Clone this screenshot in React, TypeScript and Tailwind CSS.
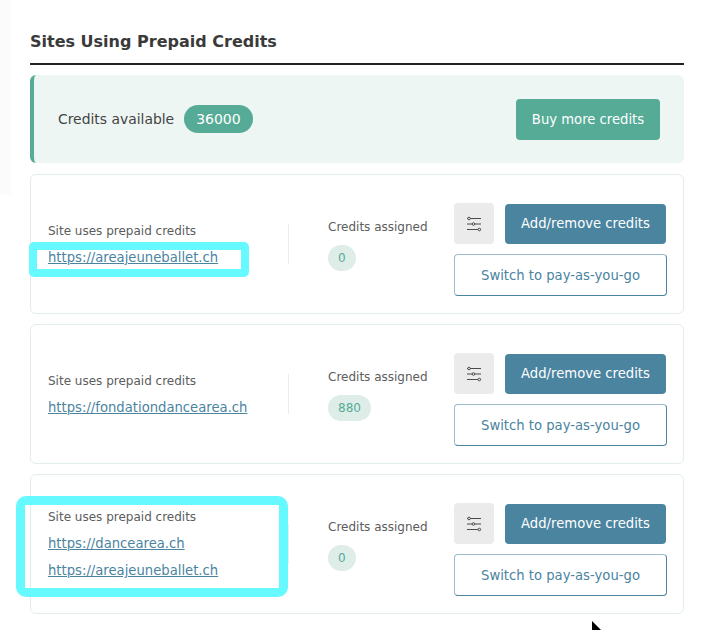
import React from 'react';

interface SiteCard {
  links: string[];
  credits: number;
}

const sites: SiteCard[] = [
  { links: ['https://areajeuneballet.ch'], credits: 0 },
  { links: ['https://fondationdancearea.ch'], credits: 880 },
  { links: ['https://dancearea.ch', 'https://areajeuneballet.ch'], credits: 0 },
];

const SlidersIcon = () => (
  <svg className="w-[16px] h-[16px]" viewBox="0 0 16 16" fill="none" stroke="#4a4a4a" strokeWidth="1">
    <path d="M4 2.5H15M1 2.5H2" />
    <circle cx="3" cy="2.5" r="1.3" />
    <path d="M1 8H6M9 8H15" />
    <circle cx="7.5" cy="8" r="1.3" />
    <path d="M1 13.5H12M14.6 13.5H15" />
    <circle cx="13.3" cy="13.5" r="1.3" />
  </svg>
);

const Card: React.FC<{ site: SiteCard }> = ({ site }) => (
  <div className="h-[140px] flex items-center pl-[17px] bg-white border border-[#e3ecef] rounded-md">
    <div className="w-[241px] h-[40px] flex items-center border-r border-[#e8eef0]">
      <div className="flex flex-col shrink-0 gap-[11px]">
        <span className="text-[12px] leading-[16px] text-[#5c5c5c]">Site uses prepaid credits</span>
        {site.links.map((link) => (
          <a key={link} href="#" className="text-[13.2px] leading-[16px] text-[#4a849f] underline">
            {link}
          </a>
        ))}
      </div>
    </div>
    <div className="ml-[39px] w-[126px] flex flex-col items-start gap-[10px] mt-[2px]">
      <span className="text-[12px] leading-[16px] text-[#5c5c5c]">Credits assigned</span>
      <span className="min-w-[27px] h-[26px] px-[10px] flex items-center justify-center rounded-full bg-[#deede8] text-[#55ab96] text-[12px]">
        {site.credits}
      </span>
    </div>
    <div className="w-[213px] flex flex-col gap-[10px] mt-[11px]">
      <div className="flex items-center gap-[11px]">
        <button className="w-[40px] h-[41px] flex items-center justify-center rounded-[4px] bg-[#ebebeb]">
          <SlidersIcon />
        </button>
        <button className="w-[161px] h-[40px] pt-[1px] rounded-[4px] bg-[#4a849f] text-white text-[13.2px]">
          Add/remove credits
        </button>
      </div>
      <button className="w-[213px] h-[42px] pt-[2px] rounded-[4px] bg-white border border-[#9dbccb] border-r-[#4a849f] border-b-[#4a849f] text-[#4a849f] text-[13.2px]">
        Switch to pay-as-you-go
      </button>
    </div>
  </div>
);

export default function App() {
  return (
    <div
      className="relative w-[715px] h-[630px] overflow-hidden bg-white pl-[30px] pr-[31px] pt-[31px]"
      style={{ fontFamily: '"DejaVu Sans", sans-serif' }}
    >
      <div className="absolute left-0 top-0 w-[11px] h-[195px] bg-[#fbfbfc]" />

      <h2 className="text-[16px] leading-[22px] font-bold text-[#3a3a3a]">Sites Using Prepaid Credits</h2>
      <div className="h-[2px] bg-[#222222] mt-[10px]" />

      <div className="mt-[10px] h-[88px] flex items-center justify-between pl-[24px] pr-[24px] bg-[#edf6f3] border-l-4 border-[#55ab96] rounded-md">
        <div className="flex items-center gap-[10px]">
          <span className="pt-[1px] text-[13.9px] text-[#444444]">Credits available</span>
          <span className="h-[28px] px-[12px] flex items-center rounded-full bg-[#55ab96] text-white text-[14px]">
            36000
          </span>
        </div>
        <button className="w-[144px] h-[41px] pt-[1px] rounded-[4px] bg-[#55ab96] text-white text-[13.2px]">
          Buy more credits
        </button>
      </div>

      <div className="mt-[11px] flex flex-col gap-[10px]">
        {sites.map((site, i) => (
          <Card key={i} site={site} />
        ))}
      </div>

      {/* hand drawn highlights on top of the screenshot */}
      <div className="absolute left-[29px] top-[242px] w-[220px] h-[35px] border-[8px] border-[#66f9ff] rounded-[5px]" />
      <div className="absolute left-[16px] top-[496px] w-[272px] h-[101px] border-[9px] border-[#66f9ff] rounded-[10px]" />

      {/* cursor */}
      <svg className="absolute left-[591px] top-[621px] w-[12px] h-[12px]" viewBox="0 0 12 12">
        <path d="M1 0L1 12L10 9Z" fill="#000" />
      </svg>
    </div>
  );
}
